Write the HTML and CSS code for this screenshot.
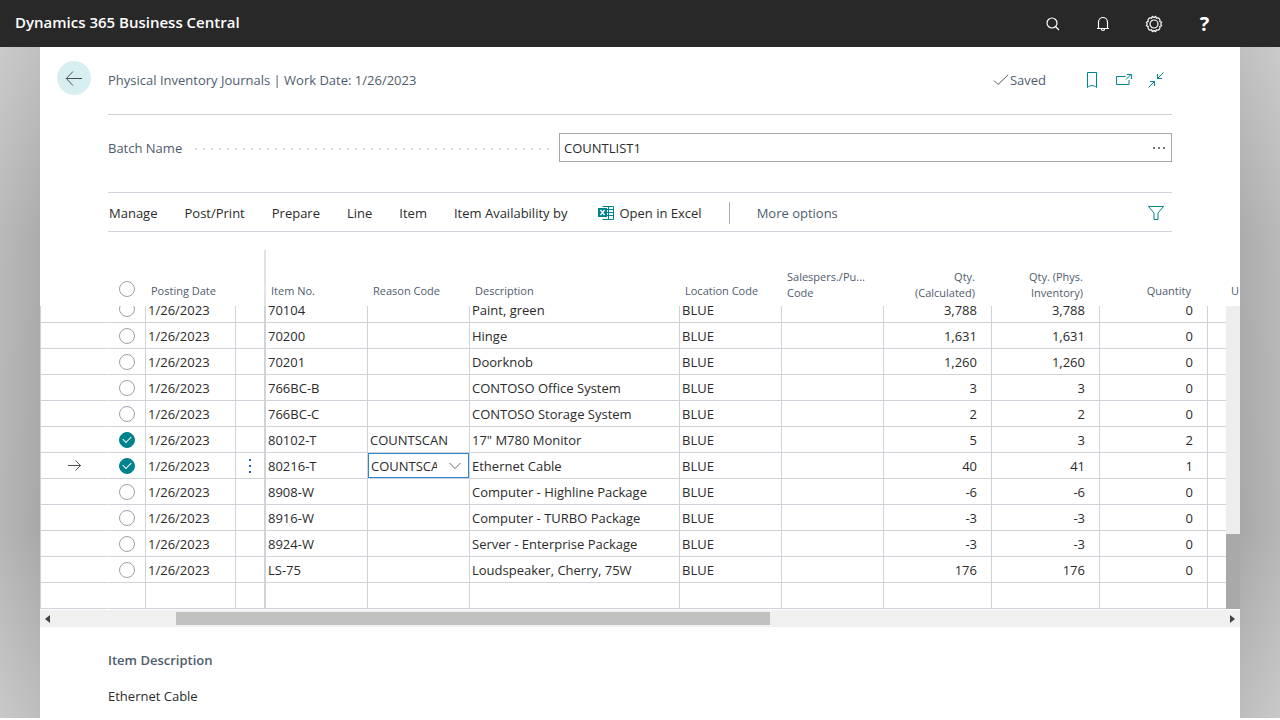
FILE: index.html
```
<!DOCTYPE html>
<html lang="en">
<head>
<meta charset="utf-8">
<title>Physical Inventory Journals - Dynamics 365 Business Central</title>
<link rel="stylesheet" href="styles.css">
</head>
<body>
<header class="topbar">
  <div class="brand">Dynamics 365 Business Central</div>
  <nav class="topbar-actions" aria-label="Application">
    <button class="icon-btn" aria-label="Search"><svg width="18" height="18" viewBox="0 0 18 18"><circle cx="9" cy="8" r="5"/><path d="M12.500 11.500l3.500 3.500"/></svg></button>
    <button class="icon-btn" aria-label="Notifications"><svg width="18" height="18" viewBox="0 0 18 18"><path d="M3 13.500h12M4.500 13.500V7a4.500 4.500 0 0 1 9 0v6.500M7.500 14a1.500 1.500 0 0 0 3 0"/></svg></button>
    <button class="icon-btn" aria-label="Settings"><svg width="18" height="18" viewBox="0 0 18 18"><circle cx="9" cy="9" r="4"/><path d="M7.300 1.500Q9 3 10.700 1.500L11.500 3.200Q13.500 2.500 14.300 3.700Q15.500 4.500 14.800 6.500L16.500 7.300Q15 9 16.500 10.700L14.800 11.500Q15.500 13.500 14.300 14.300Q13.500 15.500 11.500 14.800L10.700 16.500Q9 15 7.300 16.500L6.500 14.800Q4.500 15.500 3.700 14.300Q2.500 13.500 3.200 11.500L1.500 10.700Q3 9 1.500 7.300L3.200 6.500Q2.500 4.500 3.700 3.700Q4.500 2.500 6.500 3.200Z"/></svg></button>
    <button class="icon-btn help" aria-label="Help">?</button>
  </nav>
</header>
<main class="stage">
  <div class="page">
    <div class="title-row">
      <button class="back" aria-label="Back"><svg width="18" height="16" viewBox="0 0 18 16"><path d="M17 8.500H1.500M8 1.500L1.300 8.500 8 15.500"/></svg></button>
      <h1 class="title">Physical Inventory Journals | Work Date: 1/26/2023</h1>
      <span class="saved"><svg width="16" height="14" viewBox="0 0 16 14"><path d="M1 7.500l4 4L15 2"/></svg>Saved</span>
      <button class="page-btn" aria-label="Bookmark"><svg width="18" height="18" viewBox="0 0 18 18"><path d="M4.500 1.500h9v15c-2.500-2.500-6.500-2.500-9 0z"/></svg></button>
      <button class="page-btn" aria-label="Open in new window"><svg width="18" height="18" viewBox="0 0 18 18"><path d="M10.500 5.500h-9v8h12.500V9M11 8.500l5-5M12 3.500h4.500V8"/></svg></button>
      <button class="page-btn" aria-label="Collapse"><svg width="18" height="18" viewBox="0 0 18 18"><path d="M16.500 1.500L10.500 7.500M10.500 3v4.500H15M1.500 16.500L7.500 10.500M3 10.500h4.500V15"/></svg></button>
    </div>
    <div class="batch">
      <div class="batch-label"><label for="batch">Batch Name</label><span class="dots"></span></div>
      <div class="lookup"><input id="batch" type="text" value="COUNTLIST1"><button aria-label="Choose a batch"><svg width="14" height="4" viewBox="0 0 14 4"><path d="M1 1h2v2H1zM6 1h2v2H6zM11 1h2v2h-2z"/></svg></button></div>
    </div>
    <div class="commands" role="toolbar">
      <button>Manage</button>
      <button>Post/Print</button>
      <button>Prepare</button>
      <button>Line</button>
      <button>Item</button>
      <button>Item Availability by</button>
      <button class="excel"><svg width="17" height="16" viewBox="0 0 17 16"><path class="sheet" d="M4.500 1.500h11v13h-11M5 4.500h10.500M5 7.500h10.500M5 10.500h10.500M10.500 1.500v13"/><path class="badge" d="M0 3h9v9H0z"/><path class="cross" d="M2.500 5l4 5M6.500 5l-4 5"/></svg>Open in Excel</button>
      <span class="sep"></span>
      <button class="more">More options</button>
      <button class="filter" aria-label="Filter"><svg width="18" height="18" viewBox="0 0 18 18"><path d="M1.500 2.500h15L11 9v6.500H7V9z"/></svg></button>
    </div>
    <div class="grid">
      <table>
        <colgroup><col class="c-mark"><col class="c-check"><col class="c-date"><col class="c-menu"><col class="c-item"><col class="c-std"><col class="c-desc"><col class="c-std"><col class="c-std"><col class="c-qty"><col class="c-qty"><col class="c-qty"><col></colgroup>
        <thead><tr>
          <th></th><th class="check"><input type="checkbox" aria-label="Select all"></th><th>Posting Date</th><th></th><th class="frozen">Item No.</th><th>Reason Code</th><th>Description</th><th>Location Code</th><th class="two">Salespers./Pu...<br>Code</th><th class="num two">Qty.<br>(Calculated)</th><th class="num two">Qty. (Phys.<br>Inventory)</th><th class="num">Quantity</th><th class="cut">U</th>
        </tr></thead>
        <tbody id="rows"></tbody>
      </table>
      <div class="vscroll"><span></span></div>
    </div>
    <div class="hscroll">
      <button aria-label="Scroll left"><svg width="5" height="8" viewBox="0 0 5 8"><path d="M5 0v8L0 4z"/></svg></button>
      <div class="htrack"><span></span></div>
      <button aria-label="Scroll right"><svg width="5" height="8" viewBox="0 0 5 8"><path d="M0 0v8l5-4z"/></svg></button>
    </div>
    <section class="details">
      <h2>Item Description</h2>
      <p>Ethernet Cable</p>
    </section>
  </div>
</main>
<script src="grid.js"></script>
</body>
</html>
```
FILE: grid.js
```
const lines = [
  ["70104", "", "Paint, green", "3,788", "3,788", "0"],
  ["70200", "", "Hinge", "1,631", "1,631", "0"],
  ["70201", "", "Doorknob", "1,260", "1,260", "0"],
  ["766BC-B", "", "CONTOSO Office System", "3", "3", "0"],
  ["766BC-C", "", "CONTOSO Storage System", "2", "2", "0"],
  ["80102-T", "COUNTSCAN", "17\" M780 Monitor", "5", "3", "2"],
  ["80216-T", "COUNTSCAN", "Ethernet Cable", "40", "41", "1"],
  ["8908-W", "", "Computer - Highline Package", "-6", "-6", "0"],
  ["8916-W", "", "Computer - TURBO Package", "-3", "-3", "0"],
  ["8924-W", "", "Server - Enterprise Package", "-3", "-3", "0"],
  ["LS-75", "", "Loudspeaker, Cherry, 75W", "176", "176", "0"],
  null
];
const arrow = '<svg class="current" width="14" height="13" viewBox="0 0 14 13"><path d="M0 6.500h13M7.500 1.500l5 5-5 5"/></svg>';
const dots = '<button class="row-menu" aria-label="Row menu"><svg width="3" height="14" viewBox="0 0 3 14"><path d="M0 0h2v2H0zM0 6h2v2H0zM0 12h2v2H0z"/></svg></button>';
const combo = '<div class="combo"><input type="text" aria-label="Reason Code" value="COUNTSCAN"><button aria-label="Choose a value"><svg width="14" height="8" viewBox="0 0 14 8"><path d="M1.500 1l5.500 5.500L12.500 1"/></svg></button></div>';
const cell = (content, cls = "") => `<td class="${cls}"><div class="cell">${content}</div></td>`;

document.getElementById("rows").innerHTML = lines.map((line, i) => {
  if (!line) {
    return "<tr>" + Array.from({ length: 13 }, (_, c) => cell("", c === 1 ? "check" : c === 4 ? "frozen" : "")).join("") + "</tr>";
  }
  const [item, reason, desc, calc, phys, qty] = line;
  const checked = reason ? "checked" : "";
  const active = item === "80216-T";
  return `<tr class="${i === 0 ? "partial" : ""}">` +
    cell(active ? arrow : "", "mark") +
    cell(`<input type="checkbox" aria-label="Select ${item}" ${checked}>`, "check") +
    cell("1/26/2023") +
    cell(active ? dots : "", "menu") +
    cell(item, "frozen") +
    (active ? `<td class="editing">${combo}</td>` : cell(reason)) +
    cell(desc) + cell("BLUE") + cell("") +
    cell(calc, "num") + cell(phys, "num") + cell(qty, "num") + cell("") + "</tr>";
}).join("");
```
FILE: styles.css
```
* { box-sizing: border-box; }
body {
  margin: 0;
  min-height: 100vh;
  padding-bottom: 2px;
  display: flex;
  flex-direction: column;
  background: #fff;
  color: #2b2b2b;
  font: 13px/20px "Open Sans", "Noto Sans", sans-serif;
}
button, input { font: inherit; color: inherit; margin: 0; }
button { border: 0; padding: 0; background: none; }
svg { display: block; flex: none; fill: none; stroke: currentColor; }

.topbar {
  height: 47px;
  padding: 0 60px 4px 15px;
  display: flex;
  align-items: center;
  background: #282828;
  color: #fff;
}
.brand { flex: 1; font-size: 15px; font-weight: 600; }
.topbar-actions { display: flex; gap: 20px; padding-top: 4px; }
.icon-btn { width: 31px; height: 31px; display: flex; align-items: center; justify-content: center; }
.icon-btn svg { stroke-width: 1.2; }
.help { font-size: 20px; font-weight: 700; }

.stage {
  flex: 1;
  display: flex;
  padding: 0 40px;
  background:
    linear-gradient(90deg, rgba(255,255,255,.16), transparent 40px, transparent calc(100% - 40px), rgba(255,255,255,.16)),
    linear-gradient(#c0c0c0, #acacac 28%, #a8a8a8 72%, #bebebe);
}
.page { flex: 1; min-width: 0; background: #fff; }

.title-row {
  height: 67px;
  margin: 0 68px 0 17px;
  padding-bottom: 2px;
  display: flex;
  align-items: center;
  color: #505c6d;
}
.back {
  width: 34px;
  height: 34px;
  margin: 0 17px 4px 0;
  display: flex;
  align-items: center;
  justify-content: center;
  border-radius: 50%;
  background: #d8eff2;
  color: #4a4a4a;
}
.title { margin: 0; flex: 1; font-size: 13px; font-weight: 400; }
.saved { display: flex; align-items: center; gap: 1px; margin-right: 37px; }
.page-btn { width: 18px; margin-right: 14px; color: #00838c; }
.page-btn:last-child { margin-right: 7px; }

.batch {
  margin: 0 68px;
  padding: 18px 0 30px;
  display: grid;
  grid-template-columns: 451px 1fr;
  border-top: 1px solid #d0d3da;
}
.batch-label { display: flex; align-items: center; gap: 13px; padding-right: 8px; color: #505c6d; }
.dots { flex: 1; height: 2px; margin-top: 2px; background: repeating-linear-gradient(90deg, #d8d8d8 0 2px, transparent 2px 8px); }
.lookup { height: 29px; display: flex; align-items: center; border: 1px solid #a6a6a6; }
.lookup input { flex: 1; min-width: 0; height: 27px; padding: 0 4px; border: 0; outline: 0; background: none; }
.lookup button { padding-right: 5px; }
.lookup svg { fill: #777; stroke: none; }

.commands {
  height: 40px;
  margin: 0 68px;
  padding: 1px 7px 0 1px;
  display: flex;
  align-items: center;
  gap: 27px;
  border-top: 1px solid #d0d3da;
  border-bottom: 1px solid #d0d3da;
  white-space: nowrap;
}
.excel { display: flex; align-items: center; gap: 4px; padding-left: 4px; }
.sheet { stroke: #00838c; }
.badge { fill: #00838c; stroke: none; }
.cross { stroke: #fff; stroke-width: 1.3; }
.sep { width: 1px; height: 22px; background: #a9adb5; }
.more { color: #505c6d; }
.filter { margin-left: auto; color: #00838c; }

.grid { position: relative; margin-top: 18px; overflow: hidden; }
table { width: 100%; table-layout: fixed; border-collapse: separate; border-spacing: 0; }
.c-mark { width: 68px; }
.c-check { width: 37px; }
.c-date { width: 90px; }
.c-menu { width: 29px; }
.c-item { width: 103px; }
.c-std { width: 102px; }
.c-desc { width: 210px; }
.c-qty { width: 108px; }
th {
  height: 56px;
  padding: 0 0 7px 6px;
  vertical-align: bottom;
  text-align: left;
  font-size: 11px;
  line-height: 16px;
  font-weight: 400;
  color: #505c6d;
  white-space: nowrap;
}
th.two { padding-bottom: 5px; }
th.num { padding-right: 16px; text-align: right; }
th.frozen { border-left: 2px solid #e3e3e3; padding-left: 5px; }
th.check { padding: 0 0 9px 11px; }
th.cut { padding-left: 24px; }
td { padding: 0; border-left: 1px solid #d0d3da; border-bottom: 1px solid #d0d3da; white-space: nowrap; }
.cell { height: 25px; padding: 0 2px; line-height: 26px; }
td.check { border-left-color: transparent; }
td.frozen { border-left-width: 2px; }
td.num .cell { padding-right: 14px; text-align: right; }
td.check .cell { display: flex; align-items: center; padding-left: 10px; }
td.mark .cell, td.menu .cell { display: flex; align-items: center; justify-content: center; }
.partial .cell, .partial .check .cell { height: 16px; display: flex; align-items: flex-end; overflow: hidden; line-height: 24px; }
.partial .num .cell { justify-content: flex-end; }
.partial .check input { margin-bottom: 5px; }
.current { color: #555; }
.row-menu svg { fill: #2a64a8; stroke: none; }

input[type=checkbox] {
  appearance: none;
  display: grid;
  place-items: center;
  flex: none;
  width: 16px;
  height: 16px;
  border: 1px solid #9aa1ad;
  border-radius: 50%;
  background: #fff;
}
input[type=checkbox]:checked { border-color: #00838c; background: #00838c; }
input[type=checkbox]:checked::after {
  content: "";
  width: 7px;
  height: 4px;
  margin-bottom: 2px;
  border-left: 1px solid #fff;
  border-bottom: 1px solid #fff;
  transform: rotate(-45deg);
}

.combo { height: 25px; display: flex; align-items: center; border: 1px solid #2b88d0; }
.combo input { flex: 1; min-width: 0; height: 23px; padding: 0 0 0 2px; border: 0; outline: 0; background: none; }
.combo button { padding: 0 6px 0 11px; color: #666; }

.vscroll { position: absolute; top: 56px; right: 0; bottom: 0; width: 14px; display: flex; align-items: flex-end; background: #eee; }
.vscroll span { width: 100%; height: 75px; background: #a9a9a9; }
.hscroll { height: 17px; margin-top: 1px; padding: 0 5px; display: flex; align-items: center; background: #f0f0f0; }
.hscroll svg { fill: #444; stroke: none; }
.htrack { flex: 1; }
.htrack span { display: block; width: 50.3%; height: 13px; margin-left: 10.7%; background: #c1c1c1; }

.details { padding: 23px 68px 0; }
.details h2 { margin: 0 0 16px; font-size: 13px; font-weight: 600; color: #505c6d; }
.details p { margin: 0; }
```
